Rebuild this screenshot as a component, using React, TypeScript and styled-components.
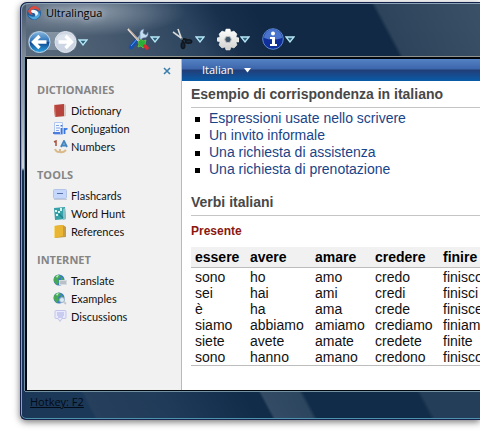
import React from 'react';
import styled, { createGlobalStyle } from 'styled-components';

const ui = 'Lato, "Open Sans", sans-serif';
const heading = '"Open Sans", "Noto Sans", sans-serif';
const doc = '"Liberation Sans", Arial, sans-serif';

const GlobalStyle = createGlobalStyle`
  * { box-sizing: border-box; }
  body { margin: 0; background: #fff; overflow-x: hidden; }
  button { border: 0; padding: 0; margin: 0; background: none; cursor: pointer; }
  svg { display: block; flex: none; }
`;

const Page = styled.div`
  padding: 2px 0 20px 20px;
  overflow: hidden;
`;

const Window = styled.main`
  padding: 0 0 0 4px;
  border: 1px solid #15224e;
  border-right: 0;
  border-radius: 7px 0 0 6px;
  box-shadow: inset 1px 1px 0 #8ba3b4, inset 0 -1px 0 #4d91ab, 0 2px 7px rgba(0, 0, 0, 0.55);
  background:
    linear-gradient(#43566b, #7f8b97 55px, #98a2ac 100px, #d0d4d8 165px, #152f50 168px, #1b3659) 0 0 / 5px 100% no-repeat,
    radial-gradient(ellipse 95px 24px at 70px 9px, rgba(185, 196, 206, 0.6), rgba(120, 140, 160, 0)) 0 0 / 100% 56px no-repeat,
    linear-gradient(62deg, transparent 335px, rgba(86, 107, 126, 0.4) 339px, rgba(86, 107, 126, 0.6)) 0 0 / 100% 56px no-repeat,
    linear-gradient(62deg, #5c6c7e, #475a6f 85px, #2b435e 165px, #18304c 195px, #112944 230px) 0 0 / 100% 56px no-repeat,
    linear-gradient(62deg, #1b3858 65px, #253f5c 68px, #203b59 135px, #112c49 210px, #112c49 222px, #334b65 225px, #2d465f 258px, #112c49 262px, #112c49 362px, #243d58 366px) 0 100% / 100% 30px no-repeat,
    #132d4b;
`;

const TitleBar = styled.header`
  display: flex;
  align-items: center;
  gap: 4px;
  height: 20px;
  padding: 0 0 0 1px;
  font: 11px/16px ${heading};
  color: #000;
  text-shadow: 0 0 6px #b9c3cd, 0 0 8px #b9c3cd;
`;

const Toolbar = styled.nav`
  display: flex;
  align-items: flex-start;
  height: 34px;
  padding: 4px 0 0 3px;
`;

const NavGroup = styled.div`
  display: flex;
  align-items: center;
  gap: 1px;
  width: 99px;
  padding-top: 3px;
`;

const NavPair = styled.div`
  display: flex;
  align-items: center;
  gap: 3px;
  border-radius: 12px;
  background: linear-gradient(transparent 2px, rgba(190, 202, 216, 0.45) 2px, rgba(190, 202, 216, 0.4) 20px, transparent 20px);
`;

const ToolButton = styled.button`
  display: flex;
  align-items: center;
  gap: 1px;
  width: 45px;
`;

const Client = styled.div`
  display: grid;
  grid-template-columns: 155px minmax(0, 1fr);
  border: solid #02070d;
  border-width: 2px 0 1px 2px;
  box-shadow: -1px 0 0 #7390a5, 0 -1px 0 #91958d, 0 1px 0 #7391a0;
`;

const Sidebar = styled.aside`
  position: relative;
  padding: 21px 0 55px 10px;
  border-right: 1px solid #b9b9b9;
  background: #f1f1f1;
`;

const Close = styled.button`
  position: absolute;
  top: 8px;
  right: 10px;
`;

const Section = styled.section`
  height: 85px;
`;

const SectionTitle = styled.h2`
  margin: 0;
  font: bold 11px/20px ${heading};
  color: #858585;
`;

const Menu = styled.ul`
  margin: 2px 0 0;
  padding: 0;
  list-style: none;
`;

const MenuLink = styled.a`
  display: flex;
  align-items: center;
  gap: 3px;
  height: 18px;
  padding-left: 16px;
  font: 11px/18px ${ui};
  color: #111;
  text-decoration: none;
`;

const Content = styled.div`
  min-width: 0;
  overflow: hidden;
  background: #fff;
`;

const LanguageBar = styled.div`
  display: flex;
  align-items: center;
  height: 22px;
  padding-left: 20px;
  background: linear-gradient(#5583c4, #3c65ab 10px, #223e77 11px, #095ba8);
`;

const LanguageButton = styled.button`
  display: flex;
  align-items: center;
  gap: 10px;
  font: 11px/16px ${heading};
  color: #fff;
`;

const Article = styled.article`
  padding: 3px 0 0 9px;
  font: 14px/16px ${doc};
  color: #111;
`;

const Heading = styled.h1`
  margin: 0;
  padding-bottom: 3px;
  border-bottom: 1px solid #c5c5c5;
  font: bold 14px/20px ${doc};
  color: #484848;
`;

const Topics = styled.ul`
  margin: 1px 0 15px;
  padding: 0;
  list-style: none;
`;

const Topic = styled.li`
  display: flex;
  align-items: center;
  gap: 9px;
  height: 17px;
  padding-left: 4px;

  &::before {
    content: '';
    width: 5px;
    height: 5px;
    margin-top: 3px;
    background: #000;
  }
`;

const TopicLink = styled.a`
  color: #1a4488;
  text-decoration: none;
`;

const Tense = styled.h2`
  margin: 7px 0 8px;
  font: bold 12px/16px ${doc};
  color: #8c1710;
`;

const Verbs = styled.table`
  width: 310px;
  table-layout: fixed;
  border-collapse: collapse;
  border-bottom: 1px solid #bdbdbd;

  th, td { padding: 0 0 0 4px; text-align: left; white-space: nowrap; }
  th { height: 20px; background: #f1f1f1; border-bottom: 1px solid #bdbdbd; color: #000; }
  td { height: 16px; }
  tbody::before { content: ''; display: table-row; height: 2px; }
`;

const Column = styled.col<{ $width: number }>`
  width: ${(p) => p.$width}px;
`;

const StatusBar = styled.footer`
  height: 28px;
  padding: 3px 0 0 5px;
  font: 11px/16px ${heading};
`;

const HotkeyLink = styled.a`
  color: #030b16;
`;

const Drop = () => (
  <svg width="10" height="7" viewBox="0 0 10 7">
    <path d="M1 1h8L5 6z" fill="#31627e" stroke="#b5e7f5" strokeWidth="1.3" />
  </svg>
);

const Logo = () => (
  <svg width="16" height="16" viewBox="0 0 16 16">
    <circle cx="8" cy="8" r="7" fill="#1d5f9e" />
    <path d="M2 6Q4 1 9 1q5 1 5 6-2-3-5-3-4 0-4 3 0 2 2 3Q3 10 2 6z" fill="#dc4b3d" />
    <path d="M5 6q1-2 4-1 4 1 3 5-1 2-3 2 1-3-1-4Q5 8 5 6z" fill="#eef4f8" />
    <path d="M2 10q4 3 8 1 3-2 2-5 4 4 0 7-5 4-10-3z" fill="#4fa6dc" />
  </svg>
);

const BackIcon = () => (
  <svg width="23" height="24" viewBox="0 0 23 24">
    <defs>
      <linearGradient id="back" x2="0" y2="1">
        <stop stopColor="#87b7e0" /><stop offset=".48" stopColor="#2c70b6" /><stop offset=".52" stopColor="#0d4690" /><stop offset="1" stopColor="#31a4e1" />
      </linearGradient>
    </defs>
    <circle cx="11.5" cy="12" r="10.5" fill="url(#back)" stroke="#bad7ec" />
    <path d="M11.500 6l-6 6 6 6M6 12H18.500" fill="none" stroke="#fff" strokeWidth="3.4" />
  </svg>
);

const ForwardIcon = () => (
  <svg width="23" height="24" viewBox="0 0 23 24">
    <circle cx="11.5" cy="12" r="10.5" fill="#ccd5e3" stroke="#e0e5ec" />
    <path d="M2 10a10 9 0 0119 0q-9 4-19 0z" fill="#dde3ec" />
    <path d="M11.500 6l6 6-6 6M17 12H4.500" fill="none" stroke="#fff" strokeWidth="3.4" />
  </svg>
);

const ToolsIcon = () => (
  <svg width="22" height="24" viewBox="0 0 22 24">
    <path d="M11 12L4 20" stroke="#174fae" strokeWidth="4.5" strokeLinecap="round" />
    <path d="M11 11L4 19" stroke="#5ba1ea" strokeWidth="1" />
    <path d="M10 13l4-5" stroke="#8da9c4" strokeWidth="2.2" />
    <path d="M13 8q-1-5 4-6l-1 4 3 2 2-3q1 6-5 6l-3 2z" fill="#c5dcf1" stroke="#5d7d9d" strokeWidth=".6" />
    <path d="M1 2l12 13" stroke="#e7ddd4" strokeWidth="2" />
    <path d="M2 2l11 13" stroke="#896454" strokeWidth=".6" />
    <path d="M11 15l3-3 2 2 3-1-1 4 1 2-3 2-2-2-3 1 1-3z" fill="#29af35" stroke="#70c750" strokeWidth=".7" />
    <path d="M18 19l2 2" stroke="#d72a33" strokeWidth="3.5" strokeLinecap="round" />
  </svg>
);

const ScissorsIcon = () => (
  <svg width="22" height="24" viewBox="0 0 22 24">
    <path d="M6 2l4 11M1 5l11 8" stroke="#b9c2c8" strokeWidth="1.7" />
    <path d="M6 2l3 9M1 5l8 6" stroke="#f1eee8" strokeWidth=".7" />
    <path d="M10 12q1 2 1 4M11 12q3 0 4 1" fill="none" stroke="#11171d" strokeWidth="2" />
    <ellipse cx="11" cy="18.5" rx="1.7" ry="3" fill="#14293c" stroke="#11171d" strokeWidth="1.6" />
    <ellipse cx="16.5" cy="14.5" rx="3.2" ry="1.7" fill="#14293c" stroke="#11171d" strokeWidth="1.6" />
    <circle cx="10" cy="12" r="1" fill="#59656d" />
  </svg>
);

const GearIcon = () => (
  <svg width="22" height="24" viewBox="0 0 22 24">
    <defs>
      <linearGradient id="gear" x2="0" y2="1"><stop stopColor="#fff" /><stop offset="1" stopColor="#d0d0cd" /></linearGradient>
    </defs>
    <path
      d="M9 2h4l1 3 3-1 3 3-1 3 3 1v4l-3 0 1 3-3 3-3-1-1 3H9l-1-3-3 1-3-3 1-3-3-1v-3l3-1-1-3 3-3 3 1z"
      fill="url(#gear)" stroke="#f5f5f3" strokeWidth=".5" strokeLinejoin="round"
    />
    <circle cx="11" cy="12.5" r="3.2" fill="#42566a" stroke="#bfc3c5" />
  </svg>
);

const InfoIcon = () => (
  <svg width="22" height="24" viewBox="0 0 22 24">
    <circle cx="11" cy="12" r="10.3" fill="#102f9a" stroke="#5b86cf" />
    <path d="M2 11a9 9 0 0118 0q-9 3-18 0z" fill="#4a74cc" />
    <circle cx="11" cy="6.5" r="2" fill="#fff" />
    <path d="M8 10h5v7h2v2H8v-2h2v-5H8z" fill="#fff" />
  </svg>
);

const globe = (
  <>
    <circle cx="6" cy="6" r="5.5" fill="#397bc5" />
    <path d="M1 4q2-4 6-3l1 2-3 2 1 3-2 3Q0 8 1 4zM8 3l3 2v3L8 7z" fill="#48a955" />
    <path d="M3 2q2-1 3-1L4 4z" fill="#c6edc9" />
  </>
);

const glyphs: Record<string, React.ReactNode> = {
  Dictionary: (
    <>
      <path d="M1 2l10-2 2 1v11l-3 1H2z" fill="#d9c8c1" />
      <path d="M1 1l10-1v12l-9 1z" fill="#b6433c" /><path d="M1 1l1-.2L3 13H2z" fill="#d97b70" />
    </>
  ),
  Conjugation: (
    <>
      <path d="M1.500 .5h8v12h-8z" fill="#f3f7ff" stroke="#b4c7ec" />
      <path d="M3 3.500h3M3 6h4M3 8.500h3" stroke="#86a3e3" />
      <path d="M8.500 6v6M8.500 3v1.500M11.500 12V6M11.500 8q1-1.500 3-1" fill="none" stroke="#3977df" strokeWidth="1.8" />
      <path d="M0 11h7" stroke="#4b7edf" strokeWidth="2" />
    </>
  ),
  Numbers: (
    <>
      <path d="M1 2l2-1v5" fill="none" stroke="#a5513c" strokeWidth="1.5" />
      <path d="M8 7l3-6 3 6M9 5.500h4" fill="none" stroke="#4385bf" strokeWidth="1.8" />
      <path d="M2 9q1 3 4 3M7 9v3q3 1 6-2" fill="none" stroke="#d8b98a" strokeWidth="2" />
    </>
  ),
  Flashcards: (
    <>
      <rect x=".5" y=".5" width="13" height="9" rx="1" fill="#c5d7fa" stroke="#b4c4e6" />
      <path d="M4 4.500h6" stroke="#586fae" /><path d="M1 10.500h13" stroke="#c7cbd4" />
    </>
  ),
  'Word Hunt': (
    <>
      <path d="M1 1l11-1 1 12-11 1z" fill="#36a1a7" /><path d="M12 1l1 11-3 1V2z" fill="#87bfc5" />
      <path d="M2 3h2v2H2zM7 1h2v3H7zM5 4h2v2H5zM3 7h2v2H3z" fill="#d3f3f1" /><path d="M6 7l4 4" stroke="#1f7f8b" strokeWidth="1.5" />
    </>
  ),
  References: (
    <>
      <path d="M1 1l9-1 3 2v10l-11 1z" fill="#c59b45" /><path d="M2 1l8-1v11l-8 2z" fill="#e9b532" />
      <path d="M1 1h1v12H1z" fill="#f5da7f" />
    </>
  ),
  Translate: (
    <>{globe}<rect x="6.5" y="6.5" width="7" height="4" fill="#b8c0c8" stroke="#d5dade" /></>
  ),
  Examples: (
    <>{globe}<circle cx="9" cy="8" r="2.5" fill="#d7edf7" stroke="#a1b2c3" /><path d="M11 10l2 2" stroke="#c5cad0" strokeWidth="2" /></>
  ),
  Discussions: (
    <>
      <path d="M3 .5h9q1 0 1 1v6q0 1-1 1H9l-2 3-2-3H3q-1 0-1-1v-6q0-1 1-1z" fill="#e9eafd" stroke="#c3c5ea" />
      <path d="M4 3h7M4 5h7M5 7h5" stroke="#a9ade0" />
    </>
  ),
};

const sections = [
  { title: 'DICTIONARIES', items: ['Dictionary', 'Conjugation', 'Numbers'] },
  { title: 'TOOLS', items: ['Flashcards', 'Word Hunt', 'References'] },
  { title: 'INTERNET', items: ['Translate', 'Examples', 'Discussions'] },
];

const topics = [
  'Espressioni usate nello scrivere',
  'Un invito informale',
  'Una richiesta di assistenza',
  'Una richiesta di prenotazione',
];

const verbs = ['essere', 'avere', 'amare', 'credere', 'finire'];
const widths = [55, 65, 60, 68, 62];
const forms = [
  ['sono', 'ho', 'amo', 'credo', 'finisco'],
  ['sei', 'hai', 'ami', 'credi', 'finisci'],
  ['è', 'ha', 'ama', 'crede', 'finisce'],
  ['siamo', 'abbiamo', 'amiamo', 'crediamo', 'finiamo'],
  ['siete', 'avete', 'amate', 'credete', 'finite'],
  ['sono', 'hanno', 'amano', 'credono', 'finiscono'],
];

export default function App() {
  return (
    <Page>
      <GlobalStyle />
      <Window>
        <TitleBar><Logo />Ultralingua</TitleBar>
        <Toolbar>
          <NavGroup>
            <NavPair>
              <button aria-label="Back"><BackIcon /></button>
              <button aria-label="Forward"><ForwardIcon /></button>
            </NavPair>
            <button aria-label="History"><Drop /></button>
          </NavGroup>
          <ToolButton aria-label="Tools"><ToolsIcon /><Drop /></ToolButton>
          <ToolButton aria-label="Edit"><ScissorsIcon /><Drop /></ToolButton>
          <ToolButton aria-label="Settings"><GearIcon /><Drop /></ToolButton>
          <ToolButton aria-label="Information"><InfoIcon /><Drop /></ToolButton>
        </Toolbar>
        <Client>
          <Sidebar>
            <Close aria-label="Close sidebar">
              <svg width="8" height="8" viewBox="0 0 8 8"><path d="M1 1l6 6M7 1L1 7" stroke="#3c7fac" strokeWidth="1.6" /></svg>
            </Close>
            {sections.map((s) => (
              <Section key={s.title}>
                <SectionTitle>{s.title}</SectionTitle>
                <Menu>
                  {s.items.map((item) => (
                    <li key={item}>
                      <MenuLink href="#">
                        <svg width="15" height="14" viewBox="0 0 15 14">{glyphs[item]}</svg>
                        {item}
                      </MenuLink>
                    </li>
                  ))}
                </Menu>
              </Section>
            ))}
          </Sidebar>
          <Content>
            <LanguageBar>
              <LanguageButton>
                Italian
                <svg width="7" height="5" viewBox="0 0 7 5"><path d="M0 0h7L3.500 4.500z" fill="#fff" /></svg>
              </LanguageButton>
            </LanguageBar>
            <Article>
              <Heading>Esempio di corrispondenza in italiano</Heading>
              <Topics>
                {topics.map((t) => <Topic key={t}><TopicLink href="#">{t}</TopicLink></Topic>)}
              </Topics>
              <Heading as="h2">Verbi italiani</Heading>
              <Tense id="tense">Presente</Tense>
              <Verbs aria-labelledby="tense">
                <colgroup>{widths.map((w, i) => <Column key={i} $width={w} />)}</colgroup>
                <thead><tr>{verbs.map((v) => <th key={v} scope="col">{v}</th>)}</tr></thead>
                <tbody>
                  {forms.map((row, i) => <tr key={i}>{row.map((f) => <td key={f}>{f}</td>)}</tr>)}
                </tbody>
              </Verbs>
            </Article>
          </Content>
        </Client>
        <StatusBar><HotkeyLink href="#">Hotkey: F2</HotkeyLink></StatusBar>
      </Window>
    </Page>
  );
}
